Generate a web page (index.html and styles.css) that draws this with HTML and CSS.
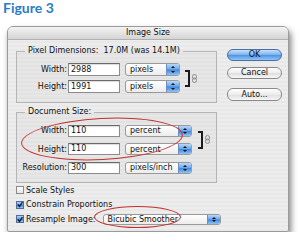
FILE: index.html
```html
<!DOCTYPE html>
<html lang="en">
<head>
  <meta charset="UTF-8" />
  <title>Figure 3 – Image Size</title>
  <link rel="stylesheet" href="styles.css">
</head>
<body>
  <h1 class="fig-title">Figure 3</h1>

  <div class="dialog">
    <div class="titlebar">Image Size</div>

    <div class="main">
      <div class="groups">
        <!-- Pixel dimensions -->
        <fieldset class="group group-pixels">
          <legend>Pixel Dimensions:&nbsp; 17.0M (was 14.1M)</legend>
          <div class="rows">
            <span class="link">
              <span class="bracket"></span>
              <svg class="chain" width="5" height="9" viewBox="0 0 5 9"><rect x="0.5" y="0.5" width="4" height="4.5" rx="2" fill="none" stroke="#8a8a8a"/><rect x="0.5" y="4" width="4" height="4.5" rx="2" fill="none" stroke="#8a8a8a"/></svg>
            </span>
            <span class="lbl">Width:</span><span class="field">2988</span><span class="popup">pixels<i class="stepper"></i></span>
            <span class="lbl">Height:</span><span class="field">1991</span><span class="popup">pixels<i class="stepper"></i></span>
          </div>
        </fieldset>

        <!-- Document size -->
        <fieldset class="group group-doc">
          <legend>Document Size:</legend>
          <div class="rows">
            <span class="link">
              <span class="bracket"></span>
              <svg class="chain" width="5" height="9" viewBox="0 0 5 9"><rect x="0.5" y="0.5" width="4" height="4.5" rx="2" fill="none" stroke="#8a8a8a"/><rect x="0.5" y="4" width="4" height="4.5" rx="2" fill="none" stroke="#8a8a8a"/></svg>
            </span>
            <span class="lbl">Width:</span><span class="field">110</span><span class="popup">percent<i class="stepper"></i></span>
            <span class="lbl">Height:</span><span class="field">110</span><span class="popup">percent<i class="stepper"></i></span>
            <span class="lbl">Resolution:</span><span class="field">300</span><span class="popup">pixels/inch<i class="stepper"></i></span>
          </div>
        </fieldset>
      </div>

      <div class="buttons">
        <div class="btn btn-ok">OK</div>
        <div class="btn btn-cancel">Cancel</div>
        <div class="btn btn-auto">Auto...</div>
      </div>
    </div>

    <div class="options">
      <div class="opt"><span class="check"></span>Scale Styles</div>
      <div class="opt">
        <span class="check on"><svg width="7" height="7" viewBox="0 0 7 7"><path d="M1 3.5 L3 5.8 L6.3 0.8" fill="none" stroke="#111" stroke-width="1.4"/></svg></span>Constrain Proportions
      </div>
      <div class="opt">
        <span class="check on"><svg width="7" height="7" viewBox="0 0 7 7"><path d="M1 3.5 L3 5.8 L6.3 0.8" fill="none" stroke="#111" stroke-width="1.4"/></svg></span>Resample Image:
        <span class="popup popup-wide">Bicubic Smoother<i class="stepper"></i></span>
      </div>
    </div>

    <!-- red annotation marks -->
    <span class="circle circle-size"></span>
    <span class="circle circle-method"></span>
  </div>
</body>
</html>
```

FILE: styles.css
```css
body {
  margin: 0;
  background: #fff;
  font-family: "DejaVu Sans", sans-serif;
}
.fig-title {
  margin: 0;
  height: 26px;
  padding-left: 3px;
  font: bold 14px/16px Lato, sans-serif;
  color: #2a7cc7;
}

.dialog {
  position: relative;
  margin-left: 7px;
  width: 282px;
  height: 206px;
  box-sizing: border-box;
  border: 1px solid #9a9a9a;
  border-radius: 6px 6px 2px 2px;
  background: repeating-linear-gradient(#ededed 0 2px, #e8e8e8 2px 4px);
  box-shadow: 2px 4px 6px rgba(0,0,0,0.5);
  font-size: 8px;
  color: #111;
}
.titlebar {
  height: 12px;
  line-height: 12px;
  text-align: center;
  background: linear-gradient(#f3f3f3, #d4d4d4);
  border-bottom: 1px solid #b0b0b0;
  border-radius: 5px 5px 0 0;
}

.main {
  display: flex;
  padding: 6px 0 0 8px;
}
.groups {
  width: 201px;
}
.group {
  margin: 0;
  min-width: 0;
  padding: 7px 0 9px 4px;
  border: 1px solid #b5b5b5;
  background: rgba(0,0,0,0.025);
}
.group legend {
  margin-left: 4px;
  padding: 0 3px;
  line-height: 10px;
}
.group-doc {
  margin-top: 4px;
  padding-top: 7.5px;
  padding-bottom: 8px;
}

.rows {
  display: grid;
  grid-template-columns: 47px 52px auto auto;
  justify-content: start;
  align-items: center;
  row-gap: 4px;
}
.group-doc .rows {
  row-gap: 6.5px;
}
.lbl {
  text-align: right;
  padding-right: 1px;
}
.field {
  height: 13px;
  line-height: 11px;
  box-sizing: border-box;
  padding-left: 2px;
  border: 1px solid #8c8c8c;
  border-top-color: #6a6a6a;
  background: #fff;
  box-shadow: inset 0 1px 1px rgba(0,0,0,0.15);
}
.group-doc .field {
  height: 12px;
  line-height: 10px;
}

.popup {
  margin-left: 5px;
  width: 55px;
  height: 13px;
  box-sizing: border-box;
  display: flex;
  align-items: center;
  justify-content: space-between;
  padding-left: 4px;
  border: 1px solid #9a9a9a;
  border-radius: 3px;
  background: linear-gradient(#fff, #ececec);
  overflow: hidden;
}
.group-doc .popup {
  width: 67px;
  height: 12px;
}
.popup-wide {
  margin-left: 7px;
  width: 118px;
  height: 11px;
}
.stepper {
  position: relative;
  width: 12px;
  align-self: stretch;
  border-left: 1px solid #6d8fbf;
  background: linear-gradient(#b9d8f8, #6aa6ea 48%, #3f86dd 52%, #8fc3f5);
}
.stepper::before,
.stepper::after {
  content: "";
  position: absolute;
  left: 4px;
  border-left: 2px solid transparent;
  border-right: 2px solid transparent;
}
.stepper::before {
  top: 2px;
  border-bottom: 2px solid #111;
}
.stepper::after {
  bottom: 2px;
  border-top: 2px solid #111;
}

.link {
  grid-column: 4;
  grid-row: 1 / span 2;
  align-self: stretch;
  display: flex;
  align-items: center;
  margin-left: 5px;
  padding: 6.5px 0;
}
.group-doc .link {
  margin-left: 6px;
  padding: 6px 0;
}
.bracket {
  align-self: stretch;
  width: 5px;
  box-sizing: border-box;
  border: 2px solid #1a1a1a;
  border-left: 0;
}
.chain {
  margin-left: 2px;
}

.buttons {
  display: flex;
  flex-direction: column;
  width: 55px;
  margin-left: 10px;
  padding-top: 3px;
}
.btn {
  height: 12px;
  line-height: 10px;
  box-sizing: border-box;
  text-align: center;
  border: 1px solid #8a8a8a;
  border-radius: 6px;
  background: linear-gradient(#fff, #ececec 50%, #dedede 52%, #f7f7f7);
}
.btn-ok {
  border-color: #4d6fa3;
  background: linear-gradient(#c6e0fa, #80b5ee 45%, #4f92e4 52%, #90c6f8);
}
.btn-cancel {
  margin-top: 6px;
}
.btn-auto {
  margin-top: 9px;
  height: 13px;
  line-height: 11px;
}

.options {
  display: flex;
  flex-direction: column;
  gap: 2.5px;
  padding: 1.5px 0 0 8px;
}
.opt {
  display: flex;
  align-items: center;
  height: 12px;
}
.check {
  width: 8px;
  height: 8px;
  box-sizing: border-box;
  margin-right: 2px;
  display: flex;
  align-items: center;
  justify-content: center;
  border: 1px solid #8a8a8a;
  background: linear-gradient(#fff, #e6e6e6);
}
.check.on {
  border-color: #4d6fa3;
  background: linear-gradient(#b8d8f8, #5a9be6 50%, #3f86dd 52%, #8fc3f5);
}

.circle {
  position: absolute;
  border: 1.5px solid #c3302f;
  border-radius: 50%;
}
.circle-size {
  left: 13px;
  top: 91px;
  width: 160px;
  height: 40px;
  transform: rotate(-3deg);
}
.circle-method {
  left: 86px;
  top: 179px;
  width: 85px;
  height: 20px;
}
```
